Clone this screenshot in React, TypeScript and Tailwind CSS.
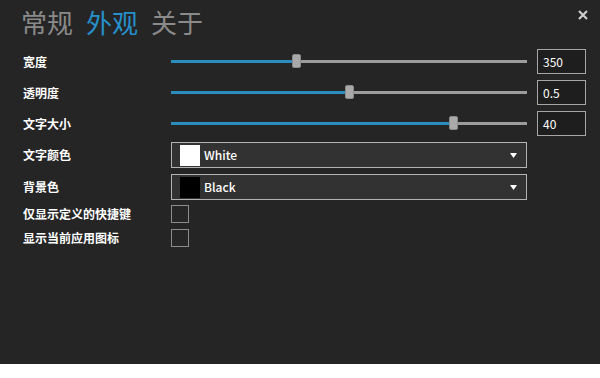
import React from 'react';

const font = { fontFamily: '"Noto Sans CJK SC", "Noto Sans", sans-serif' };

function Slider({ pct }: { pct: number }) {
  const left = Math.round((pct * 347) / 100);
  return (
    <div className="relative h-[25px] w-[356px] shrink-0">
      <div className="absolute left-0 right-0 top-[11px] h-[3px] bg-[#9c9c9c]" />
      <div className="absolute left-0 top-[11px] h-[3px] bg-[#2a8dbd]" style={{ width: `${left + 4}px` }} />
      <div
        className="absolute top-[5px] h-[14px] w-[9px] rounded-[2px] border border-[#8a8a8a] bg-[#a9a9a9]"
        style={{ left: `${left}px` }}
      />
    </div>
  );
}

function NumBox({ value }: { value: string }) {
  return (
    <div className="ml-[10px] flex h-[25px] w-[49px] shrink-0 items-center border border-[#a6a6a6] bg-[#1e1e1e] pl-[5px] text-[12px] text-white">
      {value}
    </div>
  );
}

function Dropdown({ swatch, label }: { swatch: string; label: string }) {
  return (
    <div className="flex h-[26px] w-[356px] shrink-0 items-center border border-[#b3b3b3] bg-[#323232] pl-[8px] pr-[9px]">
      <div className="h-[21px] w-[20px]" style={{ backgroundColor: swatch }} />
      <span className="ml-[4px] flex-1 text-[12px] font-medium text-white">{label}</span>
      <svg width="7" height="5" viewBox="0 0 7 5">
        <path d="M0 0h7L3.5 5z" fill="#ffffff" />
      </svg>
    </div>
  );
}

function Check() {
  return <div className="h-[18px] w-[18px] border border-[#8c8c8c] bg-[#262626]" />;
}

function Row({ label, h, children }: { label: string; h: string; children: React.ReactNode }) {
  return (
    <div className={`flex items-center ${h}`}>
      <div className="w-[148px] shrink-0 text-[12px] font-bold text-white">{label}</div>
      {children}
    </div>
  );
}

export default function App() {
  return (
    <div className="h-[378px] w-[600px] bg-white" style={font}>
      <div className="relative h-[364px] w-[600px] bg-[#252525]">
        <div className="flex gap-[13px] pl-[21px] pt-[5px] text-[26px] leading-[34px]">
          <span className="text-[#8a8a8a]">常规</span>
          <span className="text-[#2590cc]">外观</span>
          <span className="text-[#8a8a8a]">关于</span>
        </div>
        <svg className="absolute left-[578px] top-[10px]" width="10" height="10" viewBox="0 0 10 10">
          <path d="M1 1l8 8M9 1l-8 8" stroke="#cfcfcf" strokeWidth="2.2" />
        </svg>

        <div className="mt-[10px] flex flex-col pl-[23px]">
          <Row label="宽度" h="h-[25px]">
            <Slider pct={34.9} />
            <NumBox value="350" />
          </Row>
          <div className="h-[6px]" />
          <Row label="透明度" h="h-[25px]">
            <Slider pct={50.1} />
            <NumBox value="0.5" />
          </Row>
          <div className="h-[6px]" />
          <Row label="文字大小" h="h-[25px]">
            <Slider pct={80.1} />
            <NumBox value="40" />
          </Row>
          <div className="h-[6px]" />
          <Row label="文字颜色" h="h-[26px]">
            <Dropdown swatch="#ffffff" label="White" />
          </Row>
          <div className="h-[6px]" />
          <Row label="背景色" h="h-[26px]">
            <Dropdown swatch="#000000" label="Black" />
          </Row>
          <div className="h-[5px]" />
          <Row label="仅显示定义的快捷键" h="h-[18px]">
            <Check />
          </Row>
          <div className="h-[6px]" />
          <Row label="显示当前应用图标" h="h-[18px]">
            <Check />
          </Row>
        </div>
      </div>
    </div>
  );
}
